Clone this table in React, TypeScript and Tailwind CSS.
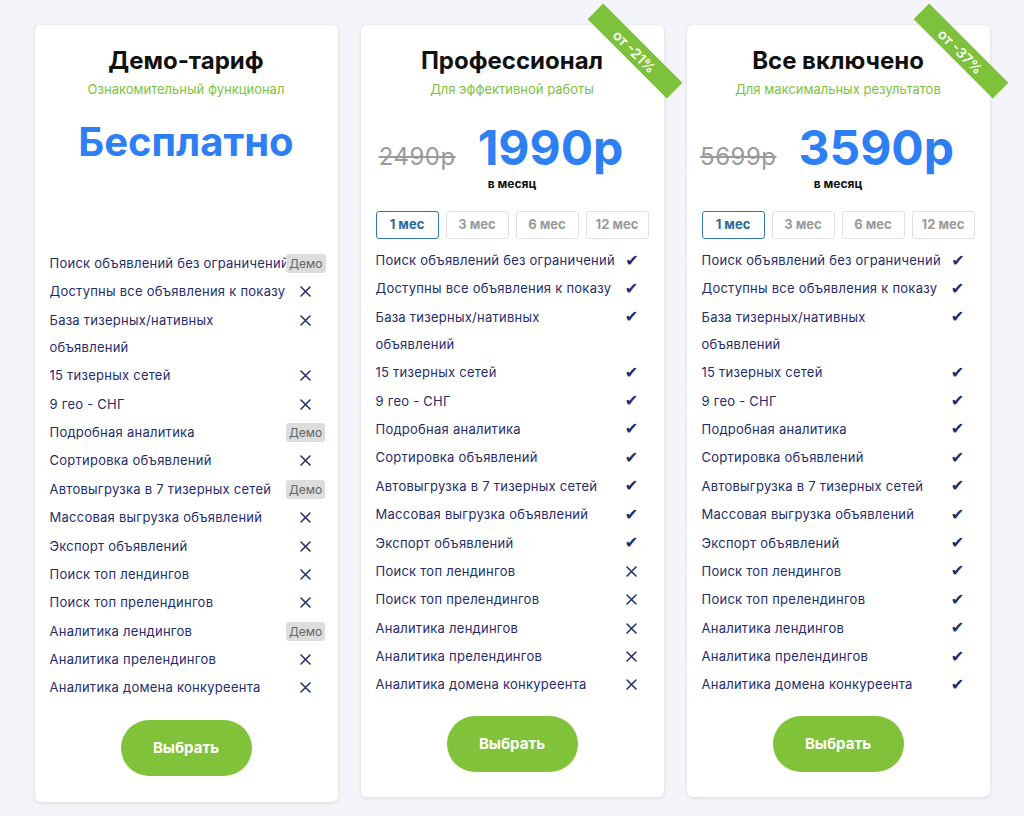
import type React from "react";

type Mark = "check" | "x" | "demo";

const features: string[][] = [
	["Поиск объявлений без ограничений"],
	["Доступны все объявления к показу"],
	["База тизерных/нативных", "объявлений"],
	["15 тизерных сетей"],
	["9 гео - СНГ"],
	["Подробная аналитика"],
	["Сортировка объявлений"],
	["Автовыгрузка в 7 тизерных сетей"],
	["Массовая выгрузка объявлений"],
	["Экспорт объявлений"],
	["Поиск топ лендингов"],
	["Поиск топ прелендингов"],
	["Аналитика лендингов"],
	["Аналитика прелендингов"],
	["Аналитика домена конкуреента"],
];

const demoMarks: Mark[] = [
	"demo", "x", "x", "x", "x", "demo", "x", "demo", "x", "x", "x", "x", "demo", "x", "x",
];
const proMarks: Mark[] = [
	"check", "check", "check", "check", "check", "check", "check", "check", "check", "check",
	"x", "x", "x", "x", "x",
];
const allMarks: Mark[] = features.map(() => "check");

const periods = ["1 мес", "3 мес", "6 мес", "12 мес"];

const CrossIcon = () => (
	<svg width="11" height="11" viewBox="0 0 11 11" className="block">
		<path d="M1 1 L10 10 M10 1 L1 10" stroke="#1f2d6e" strokeWidth="1.5" strokeLinecap="round" />
	</svg>
);

const MarkCell: React.FC<{ mark: Mark }> = ({ mark }) => (
	<div className="flex h-[27px] w-[34px] shrink-0 items-center justify-center">
		{mark === "check" && (
			<span className="text-[16px] leading-none text-[#1f2d6e] [font-family:'DejaVu_Sans',sans-serif]">
				✔
			</span>
		)}
		{mark === "x" && <CrossIcon />}
		{mark === "demo" && (
			<span className="rounded-[3px] bg-[#dddddd] px-[3px] py-[2px] text-[12px] leading-[15px] text-[#666666]">
				Демо
			</span>
		)}
	</div>
);

const FeatureList: React.FC<{ marks: Mark[] }> = ({ marks }) => (
	<div className="flex flex-col gap-[1.4px]">
		{features.map((lines, i) => (
			<div key={lines[0]} className="flex items-start justify-between">
				<div className="whitespace-nowrap text-[13px] leading-[27px] tracking-[0.25px] text-[#1f2d6e]">
					{lines.map((l) => (
						<div key={l}>{l}</div>
					))}
				</div>
				<MarkCell mark={marks[i]} />
			</div>
		))}
	</div>
);

const SelectButton = () => (
	<div className="flex justify-center">
		<button
			type="button"
			className="h-[56px] w-[131px] rounded-full bg-[#80c23a] text-[15px] font-bold text-white"
		>
			Выбрать
		</button>
	</div>
);

const Ribbon: React.FC<{ text: string }> = ({ text }) => (
	<div className="absolute left-[218px] top-[15px] flex h-[22px] w-[112px] rotate-45 items-center justify-center bg-[#7ec13a] text-[14px] font-semibold text-white">
		{text}
	</div>
);

const CardHead: React.FC<{ title: string; subtitle: string }> = ({ title, subtitle }) => (
	<div className="flex flex-col items-center">
		<h2 className="text-[24px] font-bold leading-[28px] text-[#111111]">{title}</h2>
		<p className="mt-[5px] text-[13px] leading-[18px] text-[#7dc242]">{subtitle}</p>
	</div>
);

const PaidCard: React.FC<{
	title: string;
	subtitle: string;
	oldPrice: string;
	price: string;
	discount: string;
	marks: Mark[];
}> = ({ title, subtitle, oldPrice, price, discount, marks }) => (
	<div className="relative w-[303px] rounded-[6px] bg-white px-[15px] pb-[25px] pt-[22px] shadow-[0_1px_4px_rgba(0,0,0,0.12)]">
		<Ribbon text={discount} />
		<CardHead title={title} subtitle={subtitle} />
		<div className="mt-[26px] flex items-baseline justify-center gap-[22px] pr-[22px]">
			<span className="text-[24px] leading-none tracking-[0.5px] text-[#9a9a9a] line-through">
				{oldPrice}
			</span>
			<span className="text-[48px] font-bold leading-none text-[#2d7ff3]">{price}</span>
		</div>
		<div className="mt-[4px] text-center text-[12px] font-bold leading-[16px] text-[#111111]">
			в месяц
		</div>
		<div className="mt-[19px] flex justify-between">
			{periods.map((p, i) => (
				<div
					key={p}
					className={
						i === 0
							? "flex h-[28px] w-[63px] items-center justify-center rounded-[3px] border border-[#3479a8] text-[13px] font-bold text-[#2a6a9c]"
							: "flex h-[28px] w-[63px] items-center justify-center rounded-[3px] border border-[#e0e0e0] text-[13px] font-bold text-[#9a9a9a]"
					}
				>
					{p}
				</div>
			))}
		</div>
		<div className="mt-[8px]">
			<FeatureList marks={marks} />
		</div>
		<div className="mt-[18px]">
			<SelectButton />
		</div>
	</div>
);

const DemoCard = () => (
	<div className="relative w-[303px] rounded-[6px] bg-white px-[15px] pb-[26px] pt-[22px] shadow-[0_1px_4px_rgba(0,0,0,0.12)]">
		<CardHead title="Демо-тариф" subtitle="Ознакомительный функционал" />
		<div className="mt-[24px] text-center text-[40px] font-bold leading-none text-[#2d7ff3]">
			Бесплатно
		</div>
		<div className="mt-[88px]">
			<FeatureList marks={demoMarks} />
		</div>
		<div className="mt-[19px]">
			<SelectButton />
		</div>
	</div>
);

export default function App() {
	return (
		<div className="min-h-[816px] w-full bg-[#f4f5fa] [font-family:Inter,'Liberation_Sans',sans-serif]">
			<div className="flex items-start justify-center gap-[23px] pt-[25px]">
				<DemoCard />
				<PaidCard
					title="Профессионал"
					subtitle="Для эффективной работы"
					oldPrice="2490р"
					price="1990р"
					discount="от -21%"
					marks={proMarks}
				/>
				<PaidCard
					title="Все включено"
					subtitle="Для максимальных результатов"
					oldPrice="5699р"
					price="3590р"
					discount="от -37%"
					marks={allMarks}
				/>
			</div>
		</div>
	);
}
